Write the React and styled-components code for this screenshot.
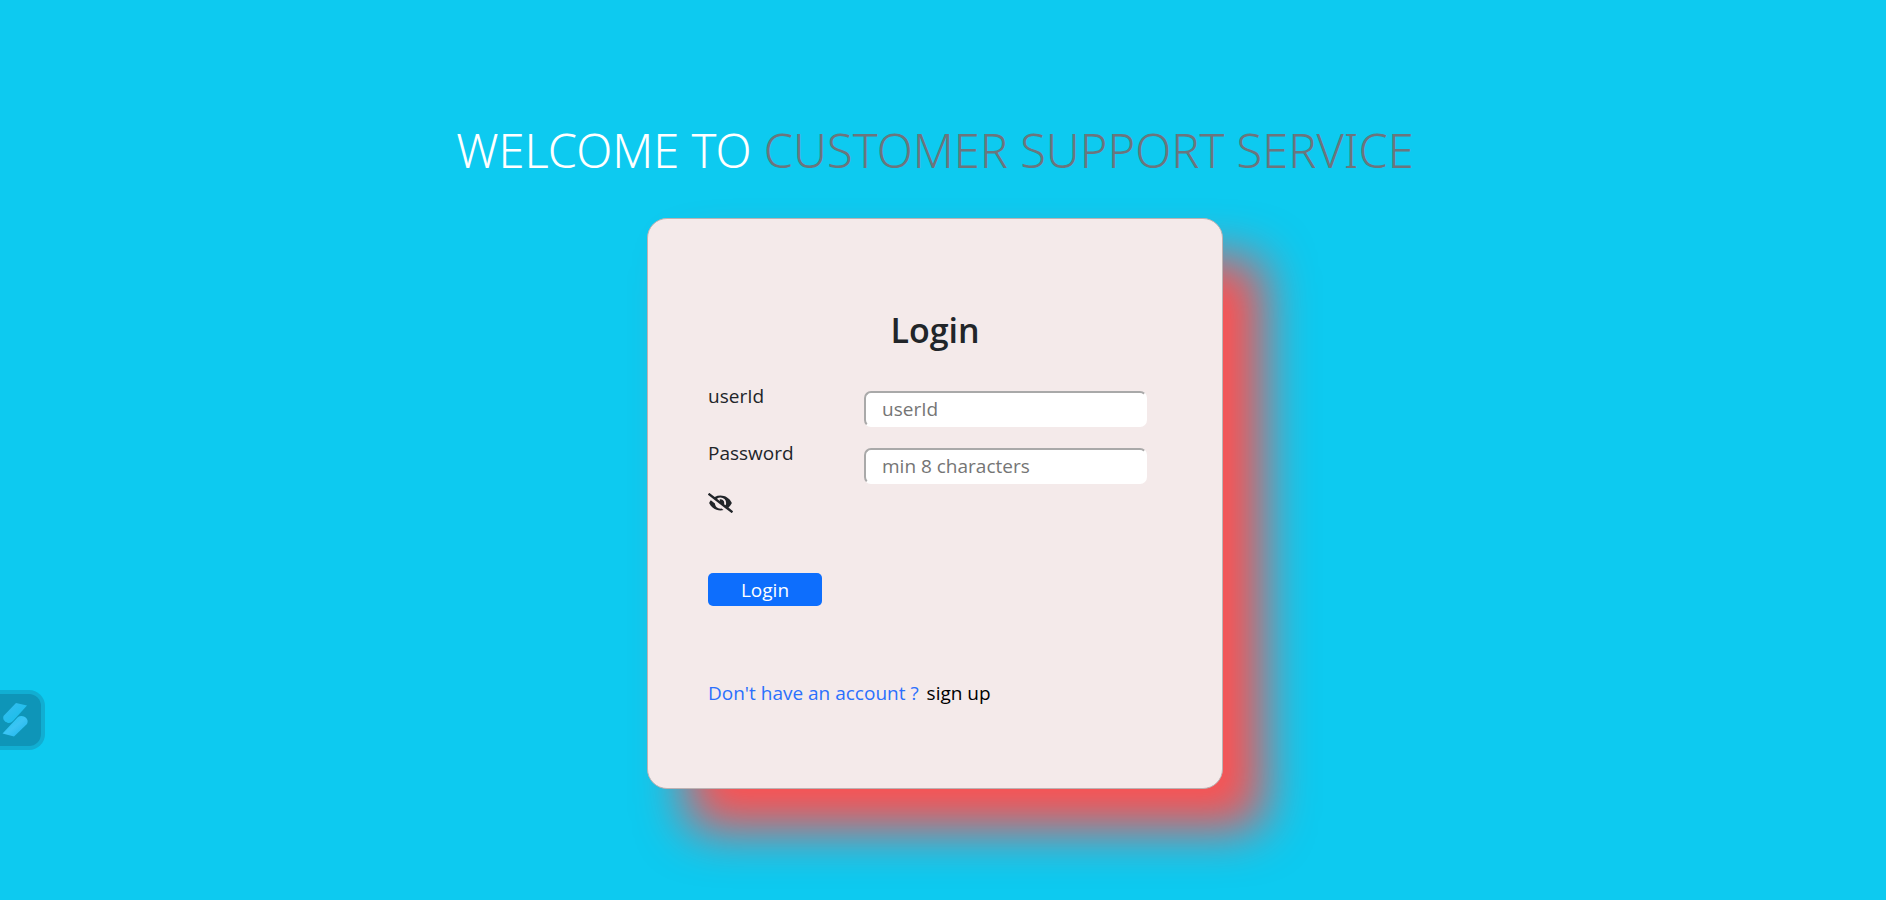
import React, { useState } from "react";
import styled, { createGlobalStyle } from "styled-components";
import { FaEyeSlash } from "react-icons/fa";

const GlobalStyle = createGlobalStyle`
  *, *::before, *::after { box-sizing: border-box; }
  body {
    margin: 0;
    background: #0dcaf0;
    color: #212529;
    font-family: "Segoe UI", "Open Sans", "Noto Sans", sans-serif;
    font-size: 19px;
    line-height: 30px;
  }
  input, button { font: inherit; }
`;

const Page = styled.main`
  display: flex;
  flex-direction: column;
  align-items: center;
  min-height: 100vh;
  padding: 120px 16px 0 0;
`;

const Title = styled.h1`
  margin: 0 0 38px;
  color: #fff;
  font-family: "Segoe UI", "Noto Sans", sans-serif;
  font-size: 47px;
  font-weight: 300;
  line-height: 60px;
  text-align: center;
  text-transform: uppercase;
`;

const Brand = styled.span`
  color: #6c757d;
`;

const Card = styled.section`
  width: 100%;
  max-width: 576px;
  padding: 88px 60px 80px;
  background: #f4eaea;
  border: 1px solid #bdb2b3;
  border-radius: 20px;
  box-shadow: 40px 40px 50px #ff5050;
`;

const CardTitle = styled.h2`
  margin: 0 0 28px;
  font-size: 34px;
  font-weight: 600;
  line-height: 46px;
  text-align: center;
`;

const LoginForm = styled.form`
  display: flex;
  flex-direction: column;
  align-items: flex-start;
`;

const Field = styled.div`
  display: grid;
  grid-template-columns: 156px 283px;
  align-items: start;

  & + & {
    margin-top: 11px;
  }
`;

const Label = styled.label`
  line-height: 30px;
`;

const Input = styled.input`
  width: 100%;
  height: 36px;
  margin-top: 10px;
  padding: 0 16px;
  background: #fff;
  border: 2px solid;
  border-color: #a9a9a9 #fff #fff #a9a9a9;
  border-radius: 7px;

  &::placeholder {
    color: #757575;
    opacity: 1;
  }
`;

const EyeButton = styled.button`
  display: flex;
  margin-top: 9px;
  padding: 0;
  background: none;
  border: 0;
  color: #212529;

  svg {
    width: 25px;
    height: 20px;
  }
`;

const LoginButton = styled.button`
  width: 114px;
  height: 33px;
  margin: 60px 0 72px;
  padding: 0;
  background: #0d6efd;
  border: 0;
  border-radius: 5px;
  color: #fff;
`;

const Footer = styled.p`
  display: flex;
  gap: 8px;
  margin: 0;
`;

const Prompt = styled.span`
  color: #2b70fd;
`;

const SignUp = styled.a`
  color: #000;
  text-decoration: none;
`;

const Badge = styled.button`
  position: fixed;
  left: 0;
  top: 690px;
  width: 45px;
  height: 60px;
  padding: 0;
  background: #0e95b8;
  border: 4px solid #11aed2;
  border-left: 0;
  border-radius: 0 16px 16px 0;

  svg {
    display: block;
  }
`;

export default function App() {
  const [visible, setVisible] = useState(false);
  return (
    <Page>
      <GlobalStyle />
      <Title>Welcome to <Brand>customer support service</Brand></Title>
      <Card>
        <CardTitle>Login</CardTitle>
        <LoginForm onSubmit={(e) => e.preventDefault()}>
          <Field>
            <Label htmlFor="userId">userId</Label>
            <Input id="userId" placeholder="userId" />
          </Field>
          <Field>
            <Label htmlFor="password">Password</Label>
            <Input id="password" type={visible ? "text" : "password"} placeholder="min 8 characters" />
          </Field>
          <EyeButton type="button" aria-label="Toggle password visibility" onClick={() => setVisible(!visible)}>
            <FaEyeSlash />
          </EyeButton>
          <LoginButton type="submit">Login</LoginButton>
        </LoginForm>
        <Footer>
          <Prompt>Don't have an account ?</Prompt>
          <SignUp href="#signup">sign up</SignUp>
        </Footer>
      </Card>
      <Badge type="button" aria-label="Open assistant">
        <svg width="41" height="52" viewBox="0 4 41 52" aria-hidden="true">
          <defs>
            <linearGradient id="upper" x1="0" y1="0" x2="1" y2="1">
              <stop offset="0" stopColor="#38bdf0" />
              <stop offset="1" stopColor="#12bfe9" />
            </linearGradient>
            <linearGradient id="lower" x1="0" y1="0" x2="1" y2="1">
              <stop offset="0" stopColor="#12c5ee" />
              <stop offset="0.5" stopColor="#3cc4f4" />
              <stop offset="1" stopColor="#16b4ec" />
            </linearGradient>
          </defs>
          <path d="M16 13 L27 15.5 L13 31 Q10 34 7 32.5 Q2 30 3.5 26 Z" fill="url(#upper)" />
          <path d="M18 27 Q21 25 25 27 Q29 30 27 34 L14 46.5 L2.5 43.5 Z" fill="url(#lower)" />
        </svg>
      </Badge>
    </Page>
  );
}
